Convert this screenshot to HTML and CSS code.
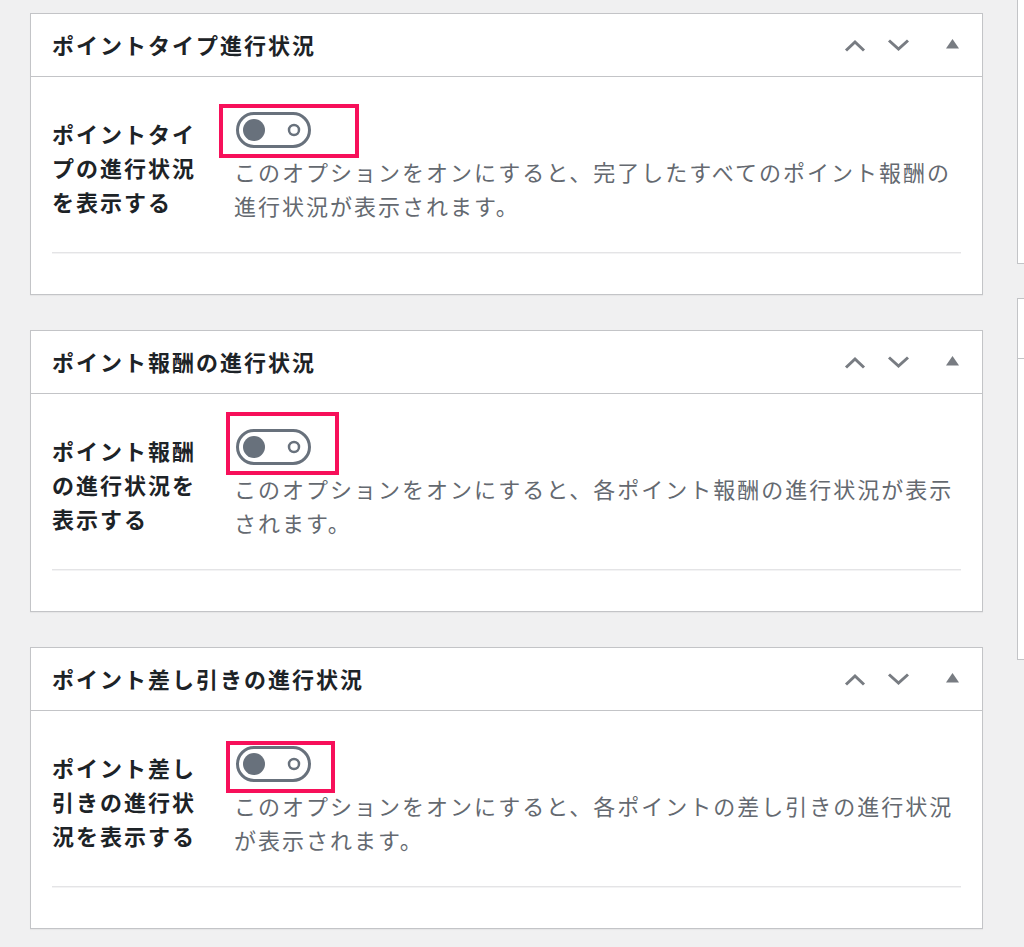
FILE: index.html
```html
<!DOCTYPE html>
<html lang="ja">
<head>
  <meta charset="UTF-8">
  <meta name="viewport" content="width=device-width, initial-scale=1.0">
  <title>ポイント進行状況の設定</title>
  <link rel="stylesheet" href="styles.css">
</head>
<body>
  <div class="wrap">
    <div class="main-col">

      <div class="postbox">
        <div class="postbox-header">
          <h2>ポイントタイプ進行状況</h2>
          <div class="handle-actions">
            <svg class="icon-up" width="22" height="13" viewBox="0 0 22 13"><polyline points="2,11.5 11,3 20,11.5"/></svg>
            <svg class="icon-down" width="23" height="13" viewBox="0 0 23 13"><polyline points="2,1.5 11.5,10 21,1.5"/></svg>
            <svg class="icon-toggle" width="13" height="10" viewBox="0 0 13 10"><polygon points="6.5,0 13,9.5 0,9.5"/></svg>
          </div>
        </div>
        <div class="inside">
          <div class="field-row">
            <div class="field-label">ポイントタイプの進行状況を表示する</div>
            <div class="field-input">
              <span class="toggle-wrap">
                <svg class="toggle" width="75" height="36" viewBox="0 0 75 36">
                  <rect x="1.5" y="1.5" width="72" height="33" rx="16.5"/>
                  <circle class="knob" cx="18" cy="18" r="11"/>
                  <circle class="dot" cx="58" cy="18" r="5"/>
                </svg>
                <span class="mark mark-1"></span>
              </span>
              <p class="description">このオプションをオンにすると、完了したすべてのポイント報酬の進行状況が表示されます。</p>
            </div>
          </div>
          <hr>
        </div>
      </div>

      <div class="postbox">
        <div class="postbox-header">
          <h2>ポイント報酬の進行状況</h2>
          <div class="handle-actions">
            <svg class="icon-up" width="22" height="13" viewBox="0 0 22 13"><polyline points="2,11.5 11,3 20,11.5"/></svg>
            <svg class="icon-down" width="23" height="13" viewBox="0 0 23 13"><polyline points="2,1.5 11.5,10 21,1.5"/></svg>
            <svg class="icon-toggle" width="13" height="10" viewBox="0 0 13 10"><polygon points="6.5,0 13,9.5 0,9.5"/></svg>
          </div>
        </div>
        <div class="inside">
          <div class="field-row">
            <div class="field-label">ポイント報酬の進行状況を表示する</div>
            <div class="field-input">
              <span class="toggle-wrap">
                <svg class="toggle" width="75" height="36" viewBox="0 0 75 36">
                  <rect x="1.5" y="1.5" width="72" height="33" rx="16.5"/>
                  <circle class="knob" cx="18" cy="18" r="11"/>
                  <circle class="dot" cx="58" cy="18" r="5"/>
                </svg>
                <span class="mark mark-2"></span>
              </span>
              <p class="description">このオプションをオンにすると、各ポイント報酬の進行状況が表示されます。</p>
            </div>
          </div>
          <hr>
        </div>
      </div>

      <div class="postbox">
        <div class="postbox-header">
          <h2>ポイント差し引きの進行状況</h2>
          <div class="handle-actions">
            <svg class="icon-up" width="22" height="13" viewBox="0 0 22 13"><polyline points="2,11.5 11,3 20,11.5"/></svg>
            <svg class="icon-down" width="23" height="13" viewBox="0 0 23 13"><polyline points="2,1.5 11.5,10 21,1.5"/></svg>
            <svg class="icon-toggle" width="13" height="10" viewBox="0 0 13 10"><polygon points="6.5,0 13,9.5 0,9.5"/></svg>
          </div>
        </div>
        <div class="inside">
          <div class="field-row">
            <div class="field-label">ポイント差し引きの進行状況を表示する</div>
            <div class="field-input">
              <span class="toggle-wrap">
                <svg class="toggle" width="75" height="36" viewBox="0 0 75 36">
                  <rect x="1.5" y="1.5" width="72" height="33" rx="16.5"/>
                  <circle class="knob" cx="18" cy="18" r="11"/>
                  <circle class="dot" cx="58" cy="18" r="5"/>
                </svg>
                <span class="mark mark-3"></span>
              </span>
              <p class="description">このオプションをオンにすると、各ポイントの差し引きの進行状況が表示されます。</p>
            </div>
          </div>
          <hr>
        </div>
      </div>

    </div>

    <div class="side-col">
      <div class="side-box side-box-top"></div>
      <div class="side-box">
        <div class="side-header"></div>
        <div class="side-body"></div>
      </div>
    </div>
  </div>
</body>
</html>
```

FILE: styles.css
```css
body {
  margin: 0;
  padding: 0;
  background: #f0f0f1;
  font-family: "Noto Sans CJK JP", "Noto Sans", sans-serif;
  color: #1d2327;
  overflow: hidden;
}
.wrap {
  display: flex;
  gap: 34px;
  padding-left: 30px;
  width: 1024px;
  box-sizing: border-box;
  overflow: hidden;
}
.main-col {
  width: 953px;
  flex-shrink: 0;
  padding-top: 13px;
}
.side-col {
  width: 300px;
  flex-shrink: 0;
}

/* metabox */
.postbox {
  background: #fff;
  border: 1px solid #c3c4c7;
  box-shadow: 0 1px 1px rgba(0,0,0,0.04);
  margin-bottom: 35px;
}
.postbox-header {
  display: flex;
  align-items: center;
  justify-content: space-between;
  height: 62px;
  padding-left: 21px;
  border-bottom: 1px solid #c3c4c7;
}
.postbox-header h2 {
  margin: 0 0 2px;
  font-size: 22px;
  font-weight: bold;
  letter-spacing: 2px;
  line-height: 34px;
  color: #1d2327;
}
.handle-actions {
  display: flex;
  align-items: center;
  padding-right: 23px;
}
.handle-actions svg {
  display: block;
}
.icon-up, .icon-down {
  fill: none;
  stroke: #787c82;
  stroke-width: 3;
}
.icon-down {
  margin-left: 21px;
}
.icon-toggle {
  fill: #787c82;
  margin-left: 36px;
  margin-top: -2px;
}

.inside {
  padding: 0 21px 40px;
}
.field-row {
  display: flex;
  padding: 35px 0 30px;
}
.field-label {
  width: 150px;
  padding-right: 34px;
  padding-top: 4px;
  flex-shrink: 0;
  font-size: 22px;
  font-weight: bold;
  letter-spacing: 2px;
  line-height: 34px;
  color: #1d2327;
}
.field-input {
  flex: 1;
}
.toggle-wrap {
  position: relative;
  display: block;
  width: 75px;
  height: 36px;
}
.toggle {
  display: block;
}
.toggle rect {
  fill: none;
  stroke: #68717c;
  stroke-width: 3;
}
.toggle .knob {
  fill: #68717c;
}
.toggle .dot {
  fill: none;
  stroke: #68717c;
  stroke-width: 2.5;
}

/* red annotation frames */
.mark {
  position: absolute;
  border: 4px solid #f7105a;
  box-sizing: border-box;
}
.mark-1 {
  left: -17px;
  top: -8px;
  width: 140px;
  height: 54px;
}
.mark-2 {
  left: -10px;
  top: -17px;
  width: 113px;
  height: 63px;
}
.mark-3 {
  left: -10px;
  top: -5px;
  width: 109px;
  height: 52px;
}

.description {
  margin: 6px 0 0 -2px;
  font-size: 22px;
  letter-spacing: 2px;
  line-height: 34px;
  color: #646970;
}
hr {
  margin: 0;
  height: 0;
  border: 0;
  border-top: 1px solid #e4e4e6;
  border-bottom: 1px solid #f3f3f4;
}

/* sidebar boxes cut off at the right edge */
.side-box {
  background: #fff;
  border: 1px solid #c3c4c7;
  margin-bottom: 34px;
}
.side-box-top {
  border-top: none;
  height: 263px;
}
.side-header {
  height: 59px;
  border-bottom: 1px solid #c3c4c7;
}
.side-body {
  height: 300px;
}
```
